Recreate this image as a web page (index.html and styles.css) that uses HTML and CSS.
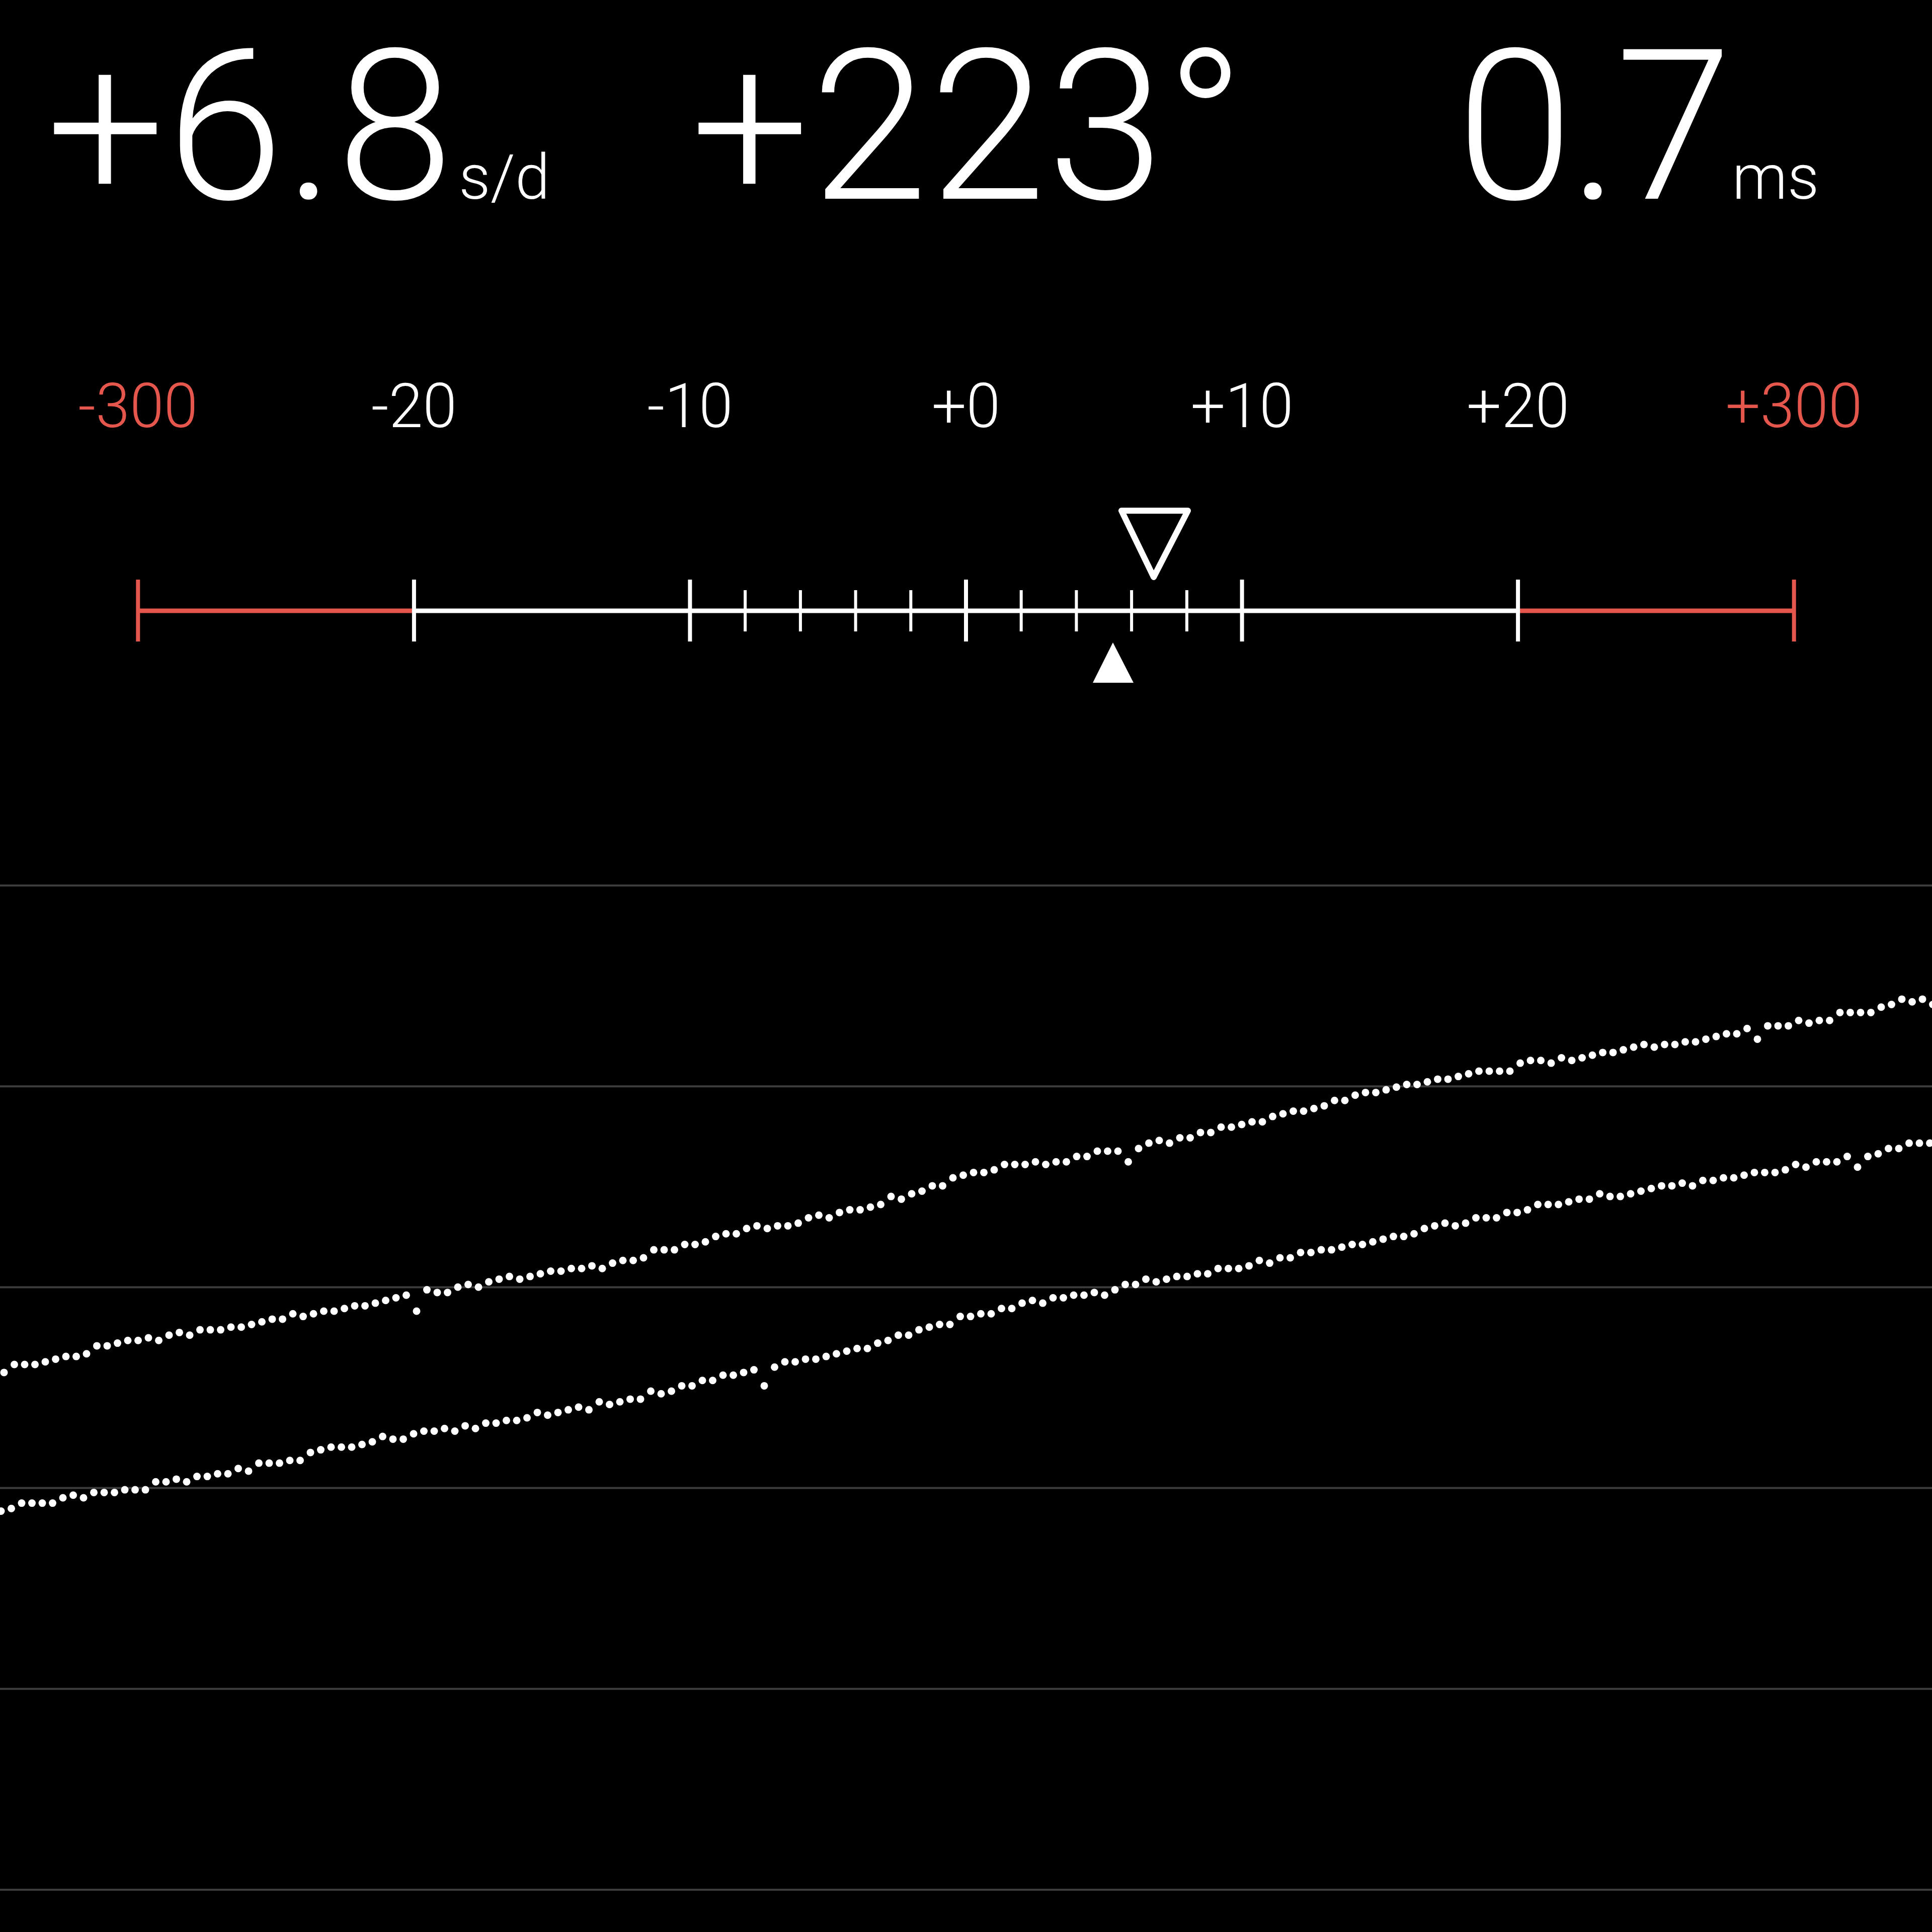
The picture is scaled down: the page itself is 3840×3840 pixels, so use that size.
FILE: index.html
```html
<!DOCTYPE html>
<html lang="en">
<head>
<meta charset="utf-8">
<title>Watch accuracy</title>
<link rel="stylesheet" href="styles.css">
</head>
<body>
<main class="screen">
  <header class="readout">
    <div class="reading"><span class="value">+6.8</span><span class="unit">s/d</span></div>
    <div class="reading"><span class="value">+223°</span></div>
    <div class="reading"><span class="value value-narrow">0.7</span><span class="unit">ms</span></div>
  </header>

  <section class="scale">
    <div class="scale-labels">
      <span class="label warn">-300</span>
      <span class="label">-20</span>
      <span class="label">-10</span>
      <span class="label">+0</span>
      <span class="label">+10</span>
      <span class="label">+20</span>
      <span class="label warn">+300</span>
    </div>
    <svg class="scale-axis" viewBox="0 0 3840 380" width="3840" height="380">
      <line class="axis warn-stroke" x1="274.3" y1="214" x2="822.9" y2="214"/>
      <line class="axis" x1="822.9" y1="214" x2="3017.1" y2="214"/>
      <line class="axis warn-stroke" x1="3017.1" y1="214" x2="3565.7" y2="214"/>

      <line class="tick warn-stroke" x1="274.3" y1="152" x2="274.3" y2="275"/>
      <line class="tick" x1="822.9" y1="152" x2="822.9" y2="275"/>
      <line class="tick" x1="1371.4" y1="152" x2="1371.4" y2="275"/>
      <line class="tick" x1="1920" y1="152" x2="1920" y2="275"/>
      <line class="tick" x1="2468.6" y1="152" x2="2468.6" y2="275"/>
      <line class="tick" x1="3017.1" y1="152" x2="3017.1" y2="275"/>
      <line class="tick warn-stroke" x1="3565.7" y1="152" x2="3565.7" y2="275"/>

      <line class="minor" x1="1481.1" y1="173" x2="1481.1" y2="255"/>
      <line class="minor" x1="1590.9" y1="173" x2="1590.9" y2="255"/>
      <line class="minor" x1="1700.6" y1="173" x2="1700.6" y2="255"/>
      <line class="minor" x1="1810.3" y1="173" x2="1810.3" y2="255"/>
      <line class="minor" x1="2029.7" y1="173" x2="2029.7" y2="255"/>
      <line class="minor" x1="2139.4" y1="173" x2="2139.4" y2="255"/>
      <line class="minor" x1="2249.1" y1="173" x2="2249.1" y2="255"/>
      <line class="minor" x1="2358.9" y1="173" x2="2358.9" y2="255"/>

      <polygon class="marker-hollow" points="2229,15 2361,15 2293,147"/>
      <polygon class="marker-solid" points="2172,357 2253,357 2212,277"/>
    </svg>
  </section>

  <section class="graph">
    <svg class="graph-plot" viewBox="0 0 3840 2082" width="3840" height="2082">
      <g class="grid">
        <line x1="0" y1="2" x2="3840" y2="2"/>
        <line x1="0" y1="401.2" x2="3840" y2="401.2"/>
        <line x1="0" y1="800.4" x2="3840" y2="800.4"/>
        <line x1="0" y1="1199.6" x2="3840" y2="1199.6"/>
        <line x1="0" y1="1598.8" x2="3840" y2="1598.8"/>
        <line x1="0" y1="1998" x2="3840" y2="1998"/>
      </g>
      <g id="dots" class="dots"></g>
    </svg>
  </section>
</main>
<script src="script.js"></script>
</body>
</html>
```

FILE: styles.css
```css
html, body {
  margin: 0;
  padding: 0;
  background: #000;
}

.screen {
  width: 3840px;
  height: 3840px;
  background: #000;
  color: #fff;
  font-family: Roboto, "Liberation Sans", sans-serif;
  font-weight: 300;
  overflow: hidden;
}

.readout {
  display: grid;
  grid-template-columns: 1281px 1522px 1fr;
  padding-left: 92px;
  padding-top: 43px;
  height: 704px;
  box-sizing: border-box;
}

.reading {
  display: flex;
  align-items: baseline;
}

.value {
  font-size: 418px;
  line-height: 418px;
  letter-spacing: 3px;
}

.value-narrow {
  letter-spacing: -8px;
}

.unit {
  font-size: 124px;
  line-height: 124px;
  margin-left: 8px;
}

.scale-labels {
  display: grid;
  grid-template-columns: repeat(7, 1fr);
  height: 296px;
  padding-top: 43px;
  box-sizing: border-box;
}

.label {
  text-align: center;
  font-size: 122px;
  line-height: 122px;
}

.label.warn {
  color: #e5574c;
}

.scale-axis {
  display: block;
}

.axis {
  stroke: #fff;
  stroke-width: 9;
}

.tick {
  stroke: #fff;
  stroke-width: 8;
}

.minor {
  stroke: #fff;
  stroke-width: 6;
}

.warn-stroke {
  stroke: #e5574c;
}

.marker-hollow {
  fill: none;
  stroke: #fff;
  stroke-width: 12;
  stroke-linejoin: round;
}

.marker-solid {
  fill: #fff;
}

.graph {
  margin-top: 378px;
}

.graph-plot {
  display: block;
}

.grid line {
  stroke: #3c3c3c;
  stroke-width: 4;
}

.dots circle {
  fill: #fff;
}
```

FILE: script.js
```js
(function () {
  var S = 3840 / 1568;
  var TOP = 1758;
  var series = [
    { start: 8, pts: [[0,1112],[100,1090],[200,1075],[300,1058],[400,1040],[500,1025],[600,1000],[700,980],[800,950],[900,935],[1000,915],[1100,890],[1200,870],[1300,855],[1400,840],[1500,823],[1568,808]] },
    { start: 2, pts: [[0,1225],[100,1210],[200,1192],[300,1170],[400,1155],[500,1138],[600,1115],[700,1095],[800,1065],[900,1045],[1000,1030],[1100,1010],[1200,990],[1300,970],[1400,957],[1500,940],[1568,925]] }
  ];

  var seed = 20240611;
  function rand() {
    seed |= 0; seed = seed + 0x6D2B79F5 | 0;
    var t = Math.imul(seed ^ seed >>> 15, 1 | seed);
    t = t + Math.imul(t ^ t >>> 7, 61 | t) ^ t;
    return ((t ^ t >>> 14) >>> 0) / 4294967296;
  }

  function interp(pts, xs) {
    for (var i = 0; i < pts.length - 1; i++) {
      var a = pts[i], b = pts[i + 1];
      if (xs <= b[0]) {
        var f = (xs - a[0]) / (b[0] - a[0]);
        return a[1] + (b[1] - a[1]) * f;
      }
    }
    return pts[pts.length - 1][1];
  }

  var NS = 'http://www.w3.org/2000/svg';
  var g = document.getElementById('dots');
  var Q = 5.3;
  series.forEach(function (s) {
    for (var x = s.start; x < 3846; x += 20.5) {
      var y = interp(s.pts, x / S) * S - TOP;
      y += (rand() - 0.5) * 11;
      if (rand() < 0.012) y += 14 + rand() * 18;
      y = Math.round(y / Q) * Q;
      var c = document.createElementNS(NS, 'circle');
      c.setAttribute('cx', x.toFixed(1));
      c.setAttribute('cy', y.toFixed(1));
      c.setAttribute('r', '7.5');
      g.appendChild(c);
    }
  });
})();
```
